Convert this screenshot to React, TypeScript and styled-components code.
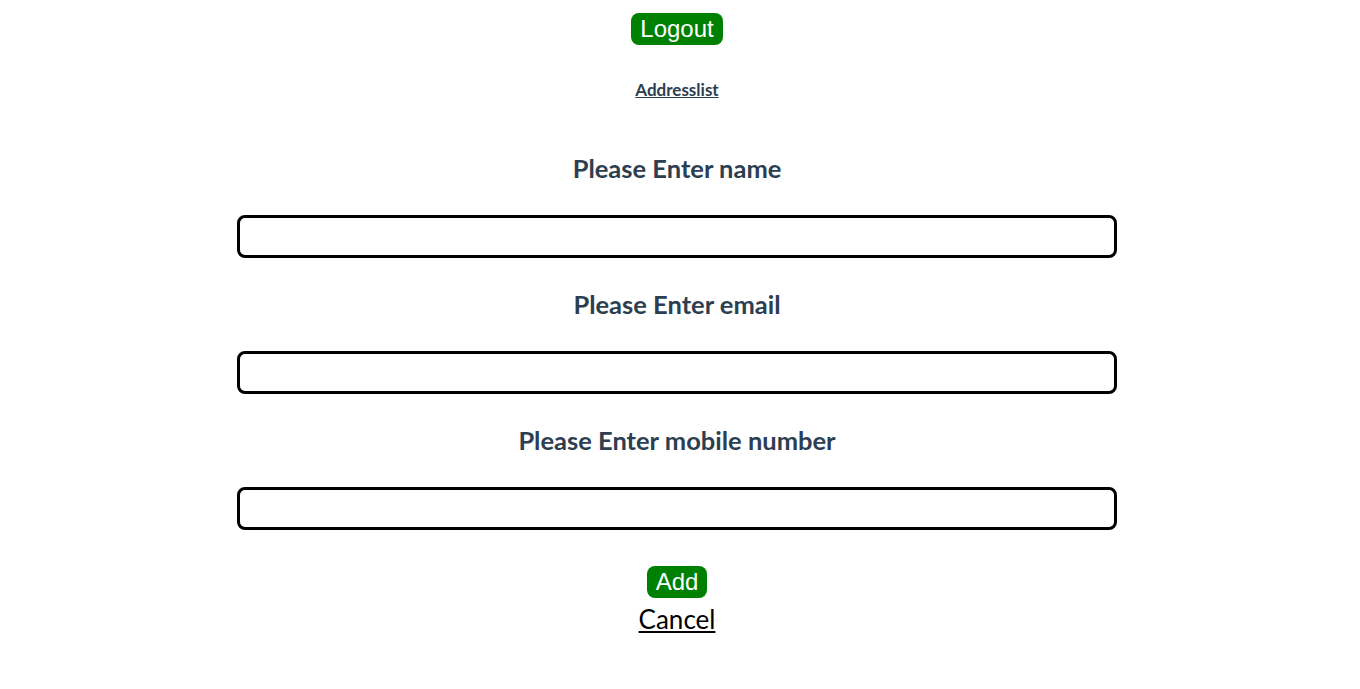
import React from 'react';
import styled, { createGlobalStyle } from 'styled-components';

const GlobalStyle = createGlobalStyle`
  html, body {
    margin: 0;
    padding: 0;
    background: #ffffff;
  }
  body {
    font-family: Lato, 'Noto Sans', 'Liberation Sans', sans-serif;
    color: #2c3e50;
    -webkit-font-smoothing: antialiased;
  }
`;

const fields = [
  { label: 'Please Enter name', type: 'text' },
  { label: 'Please Enter email', type: 'email' },
  { label: 'Please Enter mobile number', type: 'tel' },
];

const App: React.FC = () => {
  return (
    <>
      <GlobalStyle />
      <Page>
        <GreenButton type="button">Logout</GreenButton>
        <NavLink href="#">Addresslist</NavLink>

        <Form onSubmit={(e) => e.preventDefault()}>
          {fields.map((f) => (
            <Field key={f.label}>
              <Label>{f.label}</Label>
              <Input type={f.type} />
            </Field>
          ))}
        </Form>

        <Actions>
          <GreenButton type="button">Add</GreenButton>
          <CancelLink href="#">Cancel</CancelLink>
        </Actions>
      </Page>
    </>
  );
};

const Page = styled.div`
  position: relative;
  box-sizing: border-box;
  width: 100%;
  display: flex;
  flex-direction: column;
  align-items: center;
  padding: 13px 6px 0 0;
  text-align: center;
`;

const GreenButton = styled.button`
  height: 32px;
  padding: 0 9px;
  border: none;
  border-radius: 8px;
  background: #008000;
  color: #ffffff;
  font-family: 'Liberation Sans', Arial, sans-serif;
  font-size: 24px;
  line-height: 32px;
  cursor: pointer;
`;

const NavLink = styled.a`
  margin-top: 35px;
  font-size: 17px;
  line-height: 20px;
  font-weight: 700;
  color: #2c3e50;
  text-decoration: underline;
`;

const Form = styled.form`
  margin-top: 55px;
  width: 880px;
  display: flex;
  flex-direction: column;
  gap: 33px;
`;

const Field = styled.div`
  display: flex;
  flex-direction: column;
  align-items: center;
  gap: 34px;
`;

const Label = styled.h3`
  margin: 0;
  font-size: 25.5px;
  line-height: 26px;
  font-weight: 700;
  color: #2c3e50;
`;

const Input = styled.input`
  box-sizing: border-box;
  width: 880px;
  height: 43px;
  border: 3px solid #000000;
  border-radius: 8px;
  padding: 0 10px;
  font-size: 16px;
  outline: none;
`;

const Actions = styled.div`
  margin-top: 36px;
  display: flex;
  flex-direction: column;
  align-items: center;
  gap: 6px;
`;

const CancelLink = styled.a`
  font-size: 26px;
  line-height: 30px;
  color: #000000;
  text-decoration: underline;
`;

export default App;
